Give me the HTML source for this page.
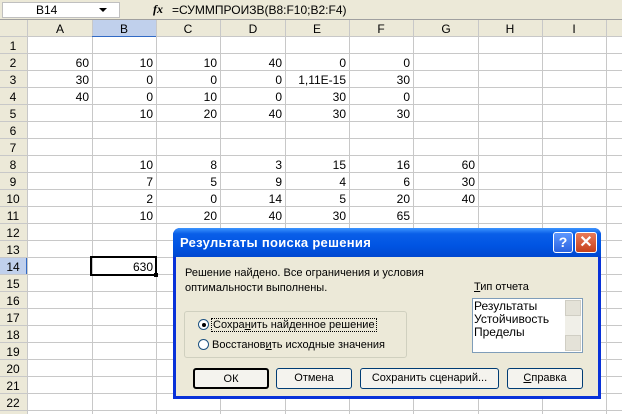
<!DOCTYPE html>
<html><head><meta charset="utf-8"><style>
*{margin:0;padding:0;box-sizing:border-box}
body{width:622px;height:414px;overflow:hidden;background:#fff;font-family:"Liberation Sans",Arial,sans-serif;font-size:12px;position:relative}
.a{position:absolute}
.fb{left:0;top:0;width:622px;height:20px;background:#ece9d8;border-bottom:1px solid #a0a0a0}
.t{font-family:"Liberation Sans",Tahoma,sans-serif;font-size:11px}
.btn{background:#f4f3ee;border:1px solid #003c74;border-radius:3px;text-align:center;line-height:19px;font-size:11px;height:21px;top:368px}
</style></head><body>
<div class="a fb"></div>
<div class="a" style="left:2px;top:2px;width:118px;height:16px;background:#fff;border:1px solid #c0c0c0"></div>
<div class="a" style="left:36px;top:3px;font-size:12px">B14</div>
<div class="a" style="left:99px;top:8px;width:0;height:0;border-left:4px solid transparent;border-right:4px solid transparent;border-top:4px solid #000"></div>
<div class="a" style="left:153px;top:2px;font-family:'Liberation Serif',serif;font-style:italic;font-weight:bold;font-size:12px">fx</div>
<div class="a" style="left:172px;top:3px;font-size:12px">=СУММПРОИЗВ(B8:F10;B2:F4)</div>
<svg class="a" style="left:0;top:20px" width="622" height="394">
<rect x="0" y="0" width="622" height="17" fill="#ece9d8"/>
<rect x="0" y="0" width="27" height="394" fill="#ece9d8"/>
<rect x="92" y="0" width="64" height="17" fill="#c0d0ec"/>
<rect x="0" y="238" width="27" height="17" fill="#c0d0ec"/>
<g stroke="#c8c8c8" stroke-width="1">
<line x1="27.5" y1="0" x2="27.5" y2="394"/>
<line x1="92.5" y1="0" x2="92.5" y2="394"/><line x1="156.5" y1="0" x2="156.5" y2="394"/>
<line x1="220.5" y1="0" x2="220.5" y2="394"/><line x1="285.5" y1="0" x2="285.5" y2="394"/>
<line x1="349.5" y1="0" x2="349.5" y2="394"/><line x1="413.5" y1="0" x2="413.5" y2="394"/>
<line x1="478.5" y1="0" x2="478.5" y2="394"/><line x1="542.5" y1="0" x2="542.5" y2="394"/>
<line x1="606.5" y1="0" x2="606.5" y2="394"/>
</g>
<g stroke="#c8c8c8">
<line x1="0" y1="16.5" x2="622" y2="16.5"/><line x1="0" y1="33.5" x2="622" y2="33.5"/><line x1="0" y1="50.5" x2="622" y2="50.5"/><line x1="0" y1="67.5" x2="622" y2="67.5"/><line x1="0" y1="84.5" x2="622" y2="84.5"/><line x1="0" y1="101.5" x2="622" y2="101.5"/><line x1="0" y1="118.5" x2="622" y2="118.5"/><line x1="0" y1="135.5" x2="622" y2="135.5"/><line x1="0" y1="152.5" x2="622" y2="152.5"/><line x1="0" y1="169.5" x2="622" y2="169.5"/><line x1="0" y1="186.5" x2="622" y2="186.5"/><line x1="0" y1="203.5" x2="622" y2="203.5"/><line x1="0" y1="220.5" x2="622" y2="220.5"/><line x1="0" y1="237.5" x2="622" y2="237.5"/><line x1="0" y1="254.5" x2="622" y2="254.5"/><line x1="0" y1="271.5" x2="622" y2="271.5"/><line x1="0" y1="288.5" x2="622" y2="288.5"/><line x1="0" y1="305.5" x2="622" y2="305.5"/><line x1="0" y1="322.5" x2="622" y2="322.5"/><line x1="0" y1="339.5" x2="622" y2="339.5"/><line x1="0" y1="356.5" x2="622" y2="356.5"/><line x1="0" y1="373.5" x2="622" y2="373.5"/><line x1="0" y1="390.5" x2="622" y2="390.5"/>
</g>
<line x1="92" y1="16.5" x2="156" y2="16.5" stroke="#316ac5"/>
<line x1="26.5" y1="238" x2="26.5" y2="254" stroke="#316ac5"/>
<g font-family="Liberation Sans" font-size="12" text-anchor="middle">
<text x="60" y="13">A</text><text x="124" y="13">B</text><text x="188" y="13">C</text><text x="253" y="13">D</text><text x="317" y="13">E</text><text x="381" y="13">F</text><text x="446" y="13">G</text><text x="510" y="13">H</text><text x="574" y="13">I</text>
<text x="13" y="30">1</text><text x="13" y="47">2</text><text x="13" y="64">3</text><text x="13" y="81">4</text><text x="13" y="98">5</text><text x="13" y="115">6</text><text x="13" y="132">7</text><text x="13" y="149">8</text><text x="13" y="166">9</text><text x="13" y="183">10</text><text x="13" y="200">11</text><text x="13" y="217">12</text><text x="13" y="234">13</text><text x="13" y="251">14</text><text x="13" y="268">15</text><text x="13" y="285">16</text><text x="13" y="302">17</text><text x="13" y="319">18</text><text x="13" y="336">19</text><text x="13" y="353">20</text><text x="13" y="370">21</text><text x="13" y="387">22</text>
</g>
<g font-family="Liberation Sans" font-size="12" text-anchor="end">
<text x="89" y="47">60</text><text x="153" y="47">10</text><text x="217" y="47">10</text><text x="282" y="47">40</text><text x="346" y="47">0</text><text x="410" y="47">0</text>
<text x="89" y="64">30</text><text x="153" y="64">0</text><text x="217" y="64">0</text><text x="282" y="64">0</text><text x="346" y="64">1,11E-15</text><text x="410" y="64">30</text>
<text x="89" y="81">40</text><text x="153" y="81">0</text><text x="217" y="81">10</text><text x="282" y="81">0</text><text x="346" y="81">30</text><text x="410" y="81">0</text>
<text x="153" y="98">10</text><text x="217" y="98">20</text><text x="282" y="98">40</text><text x="346" y="98">30</text><text x="410" y="98">30</text>
<text x="153" y="149">10</text><text x="217" y="149">8</text><text x="282" y="149">3</text><text x="346" y="149">15</text><text x="410" y="149">16</text><text x="475" y="149">60</text>
<text x="153" y="166">7</text><text x="217" y="166">5</text><text x="282" y="166">9</text><text x="346" y="166">4</text><text x="410" y="166">6</text><text x="475" y="166">30</text>
<text x="153" y="183">2</text><text x="217" y="183">0</text><text x="282" y="183">14</text><text x="346" y="183">5</text><text x="410" y="183">20</text><text x="475" y="183">40</text>
<text x="153" y="200">10</text><text x="217" y="200">20</text><text x="282" y="200">40</text><text x="346" y="200">30</text><text x="410" y="200">65</text>
<text x="153" y="251">630</text>
</g>
<rect x="91" y="237" width="65" height="18" fill="none" stroke="#000" stroke-width="2"/>
<rect x="154" y="253" width="4" height="4" fill="#000"/>
</svg>
<div class="a" style="left:173px;top:228px;width:428px;height:171px;background:#0831d9;border-radius:7px 7px 0 0"></div>
<div class="a" style="left:173px;top:228px;width:428px;height:29px;background:linear-gradient(#3d95ff,#0a5fe8 20%,#0054e3 60%,#0048d0);border-radius:7px 7px 0 0"></div>
<div class="a t" style="left:180px;top:235px;color:#fff;font-weight:bold;font-size:13px;letter-spacing:.3px">Результаты поиска решения</div>
<div class="a" style="left:553px;top:232px;width:20px;height:21px;background:linear-gradient(#5d97ff,#2a63e0);border:1px solid #fff;border-radius:3px;color:#fff;font-weight:bold;text-align:center;line-height:19px;font-size:14px">?</div>
<div class="a" style="left:575px;top:232px;width:22px;height:21px;background:linear-gradient(#e87a5a,#c6411c);border:1px solid #fff;border-radius:3px;color:#fff;font-weight:bold;text-align:center;line-height:19px;font-size:16px">✕</div>
<div class="a" style="left:176px;top:257px;width:422px;height:139px;background:#ece9d8"></div>
<div class="a t" style="left:185px;top:266px;line-height:15px">Решение найдено. Все ограничения и условия<br>оптимальности выполнены.</div>
<div class="a t" style="left:474px;top:281px"><u>Т</u>ип отчета</div>
<div class="a" style="left:472px;top:298px;width:111px;height:55px;background:#fff;border:1px solid #7f9db9"></div>
<div class="a t" style="left:474px;top:300px;line-height:13px;font-size:12px">Результаты<br>Устойчивость<br>Пределы</div>
<div class="a" style="left:565px;top:300px;width:16px;height:51px;background:#f0efe8"></div>
<div class="a" style="left:565px;top:300px;width:16px;height:16px;background:#e4e2d8;border:1px solid #d0cec4"></div>
<div class="a" style="left:565px;top:335px;width:16px;height:16px;background:#e4e2d8;border:1px solid #d0cec4"></div>
<div class="a" style="left:184px;top:311px;width:223px;height:47px;border:1px solid #d0d0bf;border-radius:3px"></div>
<div class="a" style="left:198px;top:319px;width:11px;height:11px;border-radius:50%;background:#fff;border:1px solid #1c5180"></div>
<div class="a" style="left:202px;top:323px;width:4px;height:4px;border-radius:50%;background:#000"></div>
<div class="a t" style="left:211px;top:318px;border:1px dotted #000;padding:0 1px">Сохра<u>н</u>ить найденное решение</div>
<div class="a" style="left:198px;top:339px;width:11px;height:11px;border-radius:50%;background:#fff;border:1px solid #1c5180"></div>
<div class="a t" style="left:212px;top:339px">Восстанов<u>и</u>ть исходные значения</div>
<div class="a btn t" style="left:193px;width:76px;border:2px solid #000">ОК</div>
<div class="a btn t" style="left:276px;width:76px">Отмена</div>
<div class="a btn t" style="left:360px;width:139px">Сохранить сценарий...</div>
<div class="a btn t" style="left:507px;width:76px"><u>С</u>правка</div>
</body></html>
